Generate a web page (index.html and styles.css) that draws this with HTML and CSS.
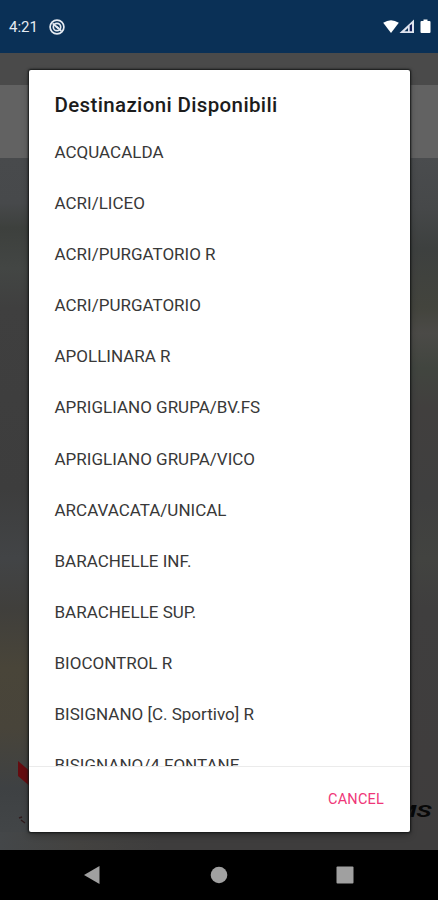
FILE: index.html
```
<!DOCTYPE html>
<html lang="it">
<head>
  <meta charset="UTF-8">
  <title>Destinazioni Disponibili</title>
  <link rel="stylesheet" href="styles.css">
</head>
<body>
  <div class="phone">
    <header class="status-bar">
      <span class="clock">4:21</span>
      <svg class="notification" width="16" height="16" viewBox="0 0 16 16" fill="none" stroke="#e6ebf2">
        <circle cx="8" cy="8" r="6.900" stroke-width="1.700"/>
        <circle cx="8" cy="8" r="3.700" stroke-width="1.700"/>
        <path d="M3.600 4.300 12.400 12" stroke-width="1.700"/>
        <path d="M7 7.200l2.500 2" stroke-width="2"/>
      </svg>
      <svg class="signals" width="49" height="16" viewBox="0 0 49 16">
        <path d="M.2 3.800Q8-1.400 15.800 3.800L8 14z" fill="#fff"/>
        <path d="M16.500 14 31 .5V14z" fill="#dfe3ee"/>
        <path d="M21.500 12.300 25 9v3.300z" fill="#0a3056"/>
        <path d="M26.700 6.500 29 5v7.300h-2.300z" fill="#14205a"/>
        <path d="M38.500 2h2V.5h4V2h2q1 0 1 1v10q0 1-1 1h-8q-1 0-1-1V3q0-1 1-1z" fill="#fff"/>
      </svg>
    </header>

    <main class="screen">
      <div class="toolbar"></div>
      <div class="field"></div>
      <div class="photo"></div>
      <svg class="logo-mark" width="14" height="70" viewBox="0 0 14 70">
        <path d="M0 0 14 12v15L0 15z" fill="#640c10"/>
        <path d="M1 57l3-1M3 59l4 3" stroke="#301c1e" stroke-width="1.500"/>
      </svg>
      <span class="logo-text">MS</span>

      <!-- Destination picker -->
      <section class="dialog">
        <h1>Destinazioni Disponibili</h1>
        <ul class="destinations">
          <li>ACQUACALDA</li>
          <li>ACRI/LICEO</li>
          <li>ACRI/PURGATORIO R</li>
          <li>ACRI/PURGATORIO</li>
          <li>APOLLINARA R</li>
          <li>APRIGLIANO GRUPA/BV.FS</li>
          <li>APRIGLIANO GRUPA/VICO</li>
          <li>ARCAVACATA/UNICAL</li>
          <li>BARACHELLE INF.</li>
          <li>BARACHELLE SUP.</li>
          <li>BIOCONTROL R</li>
          <li>BISIGNANO [C. Sportivo] R</li>
          <li>BISIGNANO/4 FONTANE</li>
        </ul>
        <div class="actions">
          <button>CANCEL</button>
        </div>
      </section>
    </main>

    <nav class="nav-bar">
      <svg width="18" height="20" viewBox="0 0 18 20"><path d="M1 10 16.500 1v18z" fill="#a0a0a0"/></svg>
      <svg width="18" height="18" viewBox="0 0 18 18"><circle cx="9" cy="9" r="8.300" fill="#a0a0a0"/></svg>
      <svg width="18" height="18" viewBox="0 0 18 18"><rect x=".5" y=".5" width="17" height="17" rx="1" fill="#a0a0a0"/></svg>
    </nav>
  </div>
</body>
</html>
```

FILE: styles.css
```
* {
  box-sizing: border-box;
}

body {
  margin: 0;
  font-family: Roboto, "Liberation Sans", sans-serif;
}

.phone {
  display: flex;
  flex-direction: column;
  width: 438px;
  height: 900px;
  overflow: hidden;
  background: #000;
}

.status-bar {
  display: flex;
  align-items: center;
  height: 53px;
  padding: 0 6px 0 9px;
  background: #0a3056;
}

.clock {
  width: 40px;
  color: #e6ebf2;
  font-size: 15px;
}

.signals {
  margin-left: auto;
}

.screen {
  position: relative;
  display: flex;
  flex-direction: column;
  height: 797px;
  overflow: hidden;
}

.toolbar {
  height: 32px;
  background: #4a4a4a;
}

.field {
  height: 73px;
  background: #626262;
}

/* dimmed background picture, different on each side of the dialog */
.photo {
  flex: 1;
  background:
    linear-gradient(90deg, #444749, #434240 80px, #3e3d3d 160px) bottom / 100% 18px no-repeat,
    linear-gradient(#484a4c 0, #47494b 45px, #3d403d 70px, #434644 110px, #3f3f3f 150px, #3d3d3d 330px, #424446 400px, #403f3c 450px, #494539 510px, #48443a 570px, #3e4143 630px, #444749 692px) left / 50% 100% no-repeat,
    linear-gradient(#4a4c4e 0, #464849 50px, #3d403f 90px, #43443d 150px, #4b4a47 175px, #41453f 210px, #413f3e 250px, #3f3f3f 340px, #424340 400px, #3f3e3e 450px, #3f3d3d 600px, #3e3d3d 692px) right / 50% 100% no-repeat;
}

.logo-mark {
  position: absolute;
  left: 18px;
  top: 708px;
}

.logo-text {
  position: absolute;
  right: 6px;
  top: 746px;
  color: #080808;
  font-size: 17px;
  font-weight: 700;
  font-style: italic;
  line-height: 24px;
  transform: scaleX(1.5);
  transform-origin: right;
}

.dialog {
  position: absolute;
  left: 28.5px;
  top: 17px;
  display: flex;
  flex-direction: column;
  width: 381.5px;
  height: 762px;
  background: #fff;
  border-radius: 2px;
  box-shadow: 0 0 2px 1px #161818, 0 3px 7px rgba(0, 0, 0, 0.3);
}

.dialog h1 {
  margin: 0;
  padding: 21px 26px 0;
  height: 57px;
  color: #1c1c1c;
  font-size: 20.5px;
  font-weight: 500;
  line-height: 28px;
  letter-spacing: 0.36px;
}

.destinations {
  flex: 1;
  margin: 0;
  padding: 0;
  overflow: hidden;
  list-style: none;
}

.destinations li {
  height: 51.1px;
  padding-left: 26px;
  color: #383838;
  font-size: 17px;
  line-height: 51px;
  white-space: nowrap;
}

.actions {
  display: flex;
  align-items: center;
  justify-content: flex-end;
  height: 65px;
  padding-right: 26px;
  box-shadow: 0 -1px #ebebeb;
}

.actions button {
  padding: 0;
  border: none;
  background: none;
  color: #ef3678;
  font-family: inherit;
  font-size: 14.5px;
  letter-spacing: 0.2px;
}

.nav-bar {
  display: flex;
  align-items: center;
  justify-content: space-between;
  height: 50px;
  padding: 0 84px 0 83px;
  background: #000;
}
```
